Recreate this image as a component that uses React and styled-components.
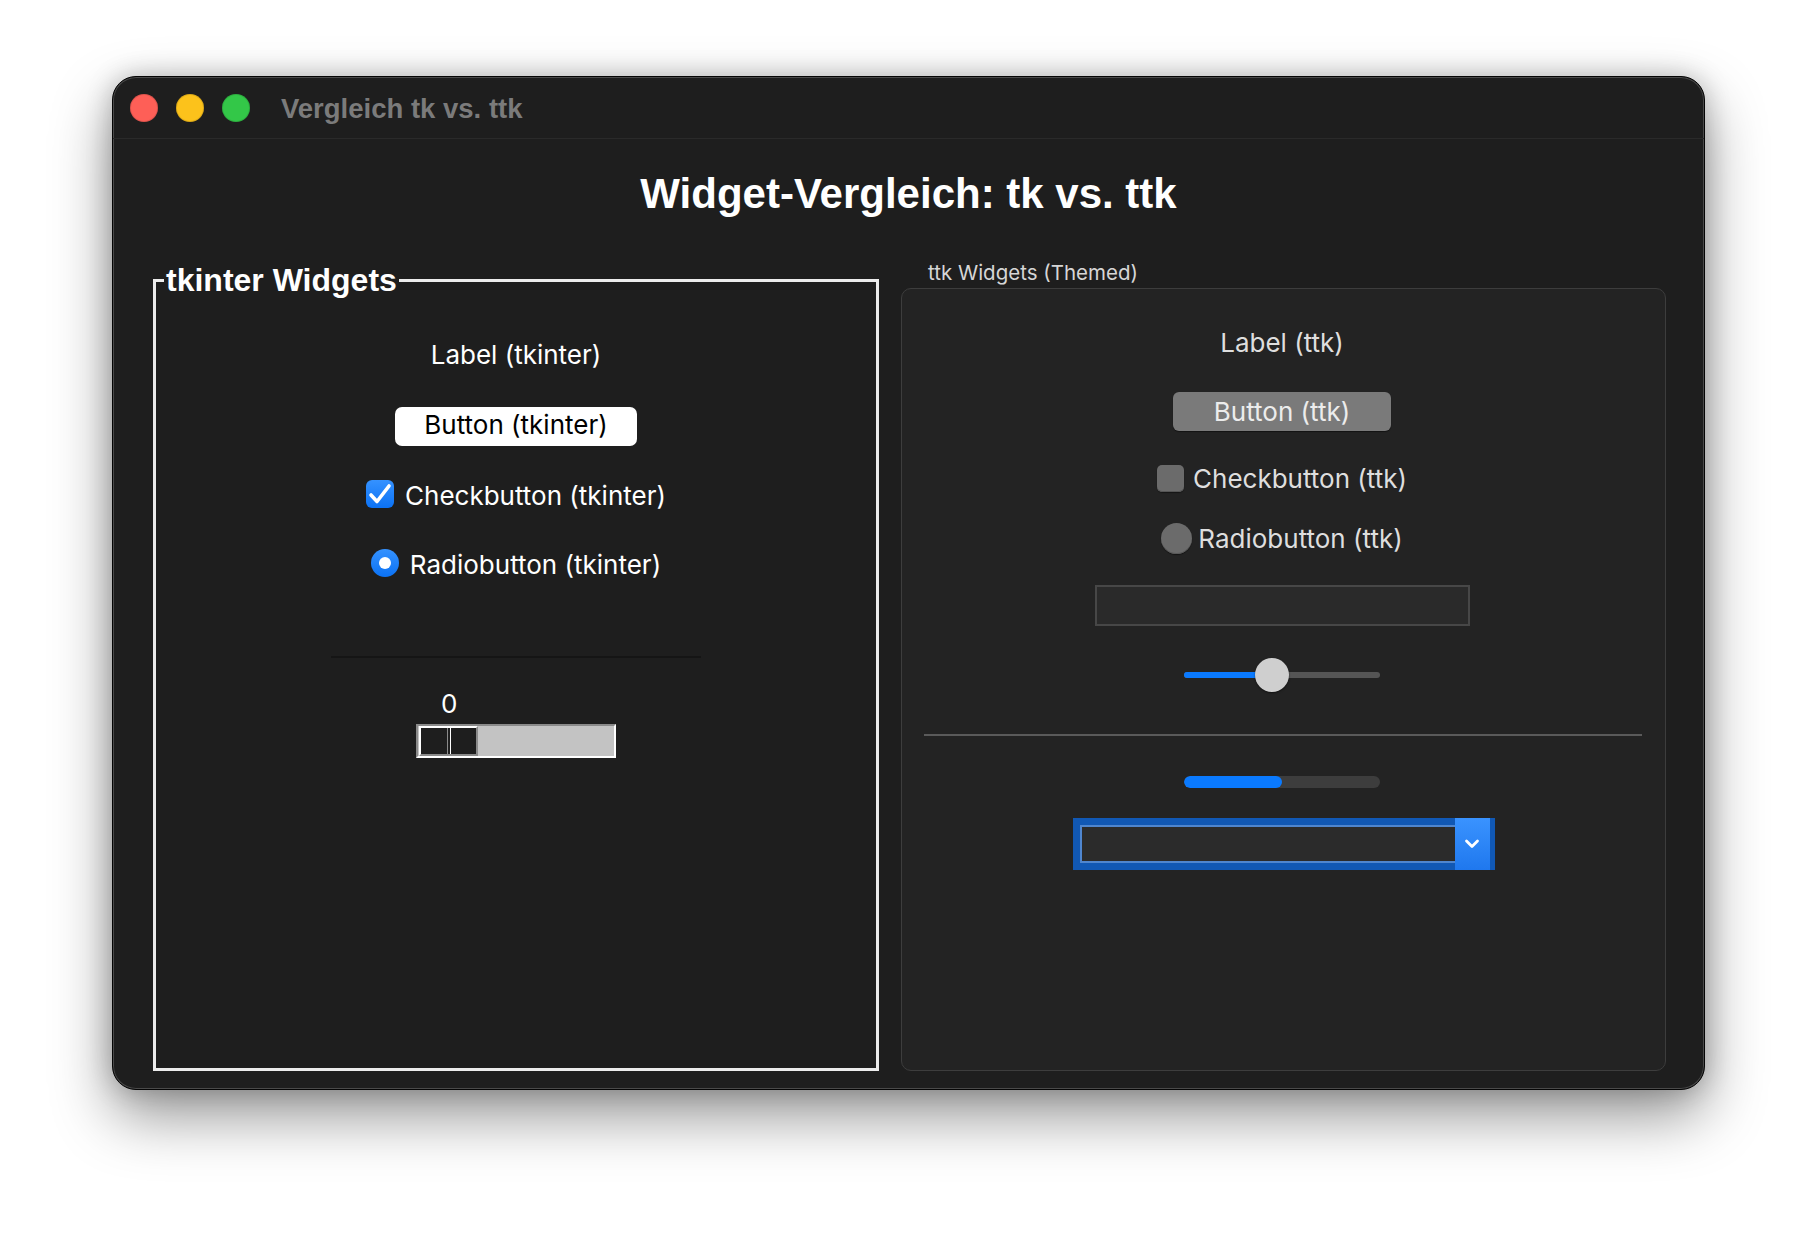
import React from 'react';
import styled, { createGlobalStyle } from 'styled-components';

const Global = createGlobalStyle`
  html, body { margin: 0; padding: 0; background: #ffffff; }
  body { width: 1818px; height: 1238px; overflow: hidden; font-family: Inter, "Noto Sans", sans-serif; }
  * { box-sizing: border-box; }
`;

const Page = styled.div`
  width: 1818px;
  height: 1238px;
  padding: 76px 0 0 112px;
  background: #ffffff;
`;

const Window = styled.div`
  width: 1593px;
  height: 1014px;
  background: #1e1e1e;
  border-radius: 24px;
  border: 1px solid #050505;
  box-shadow: inset 0 0 0 1px #4a4a4a, 0 26px 60px rgba(0, 0, 0, 0.42), 0 0 26px rgba(0, 0, 0, 0.22);
  display: flex;
  flex-direction: column;
  overflow: hidden;
`;

const TitleBar = styled.div`
  height: 62px;
  flex: none;
  display: flex;
  align-items: center;
  padding-left: 17px;
  gap: 18px;
  border-bottom: 1px solid #2a2a2a;
`;

const Light = styled.span`
  width: 28px;
  height: 28px;
  border-radius: 50%;
  background: ${(p) => p.$c};
  box-shadow: inset 0 0 0 1px rgba(0, 0, 0, 0.12);
`;

const WindowTitle = styled.span`
  margin-left: 13px;
  margin-top: 3px;
  font-family: "Liberation Sans", Arial, sans-serif;
  font-weight: 700;
  font-size: 27.5px;
  color: #7b7b7b;
`;

const Heading = styled.h1`
  margin: 31px 0 0 0;
  font-family: "Liberation Sans", Arial, sans-serif;
  font-weight: 700;
  font-size: 42px;
  line-height: 48px;
  text-align: center;
  color: #ffffff;
`;

const Columns = styled.div`
  flex: 1;
  display: flex;
  gap: 22px;
  margin-top: 44px;
  padding: 0 38px 18px 40px;
`;

/* ---------- tk side ---------- */

const TkFrame = styled.fieldset`
  margin: 0;
  padding: 42px 0 0 0;
  min-inline-size: 0;
  width: 726px;
  flex: none;
  border: 3px solid #ececec;
  display: flex;
  flex-direction: column;
  align-items: center;
`;

const TkLegend = styled.legend`
  margin-left: 8px;
  padding: 0 2px;
  font-family: "Liberation Sans", Arial, sans-serif;
  font-weight: 700;
  font-size: 32px;
  line-height: 36px;
  color: #ffffff;
`;

const Text = styled.span`
  font-size: 26px;
  line-height: 30px;
  color: ${(p) => (p.$themed ? '#dedede' : '#ffffff')};
  white-space: nowrap;
  padding-top: ${(p) => p.$drop || 0}px;
`;

const Block = styled.div`
  margin-top: ${(p) => p.$mt}px;
  flex: none;
`;

const TkButton = styled.button`
  margin-top: 37px;
  width: 242px;
  height: 39px;
  border: none;
  border-radius: 7px;
  background: #ffffff;
  color: #000000;
  font-family: Inter, "Noto Sans", sans-serif;
  font-size: 26px;
  line-height: 30px;
  padding: 0 0 3px 0;
  display: flex;
  align-items: center;
  justify-content: center;
`;

const OptionRow = styled.div`
  margin-top: ${(p) => p.$mt}px;
  height: ${(p) => p.$h}px;
  display: flex;
  align-items: center;
  gap: ${(p) => p.$gap}px;
`;

const TkCheckBox = styled.span`
  width: 28px;
  height: 28px;
  border-radius: 6px;
  background: linear-gradient(#3592ff, #0b72f5);
  display: flex;
  align-items: center;
  justify-content: center;
`;

const TkRadio = styled.span`
  width: 28px;
  height: 28px;
  border-radius: 50%;
  background: linear-gradient(#3592ff, #0b72f5);
  display: flex;
  align-items: center;
  justify-content: center;
  &::after {
    content: '';
    width: 12px;
    height: 12px;
    border-radius: 50%;
    background: #ffffff;
  }
`;

const TkSeparator = styled.div`
  margin-top: 78px;
  width: 370px;
  height: 2px;
  background: #151515;
`;

const TkScale = styled.div`
  margin-top: 31px;
  width: 200px;
  display: flex;
  flex-direction: column;
`;

const ScaleValue = styled.div`
  height: 30px;
  padding-left: 25px;
  font-size: 26px;
  line-height: 30px;
  color: #ffffff;
`;

const Trough = styled.div`
  margin-top: 5px;
  width: 200px;
  height: 34px;
  background: #c3c3c3;
  border: 2px solid;
  border-color: #8a8a8a #ffffff #ffffff #8a8a8a;
  display: flex;
  align-items: stretch;
`;

const TkSlider = styled.div`
  margin-left: 1px;
  width: 59px;
  background: #1e1e1e;
  border: 2px solid;
  border-color: #ffffff #8a8a8a #8a8a8a #ffffff;
  display: flex;
  justify-content: center;
  &::after {
    content: '';
    width: 2px;
    border-left: 1px solid #8a8a8a;
    border-right: 1px solid #ffffff;
  }
`;

/* ---------- ttk side ---------- */

const TtkColumn = styled.div`
  flex: 1;
  display: flex;
  flex-direction: column;
`;

const TtkCaption = styled.div`
  padding-left: 27px;
  font-size: 20.5px;
  line-height: 22px;
  color: #d6d6d6;
  margin-bottom: 4px;
`;

const TtkBox = styled.div`
  flex: 1;
  background: #232323;
  border: 1px solid #3d3d3d;
  border-radius: 10px;
  padding: 39px 3px 0 0;
  display: flex;
  flex-direction: column;
  align-items: center;
`;

const TtkButton = styled.button`
  margin-top: 34px;
  width: 218px;
  height: 39px;
  border: none;
  border-radius: 6px;
  background: #7a7a7a;
  box-shadow: 0 1px 1px rgba(0, 0, 0, 0.45);
  color: #ececec;
  font-family: Inter, "Noto Sans", sans-serif;
  font-size: 26px;
  line-height: 30px;
  padding: 0;
  display: flex;
  align-items: center;
  justify-content: center;
`;

const TtkCheckBox = styled.span`
  width: 27px;
  height: 27px;
  border-radius: 5px;
  background: #6b6b6b;
  box-shadow: inset 0 -1px 0 #555555, 0 1px 1px rgba(0, 0, 0, 0.4);
`;

const TtkRadio = styled.span`
  width: 31px;
  height: 31px;
  border-radius: 50%;
  background: #6b6b6b;
  box-shadow: inset 0 -1px 0 #575757, 0 1px 1px rgba(0, 0, 0, 0.45);
`;

const TtkEntry = styled.div`
  margin-top: 31px;
  width: 375px;
  height: 41px;
  background: #2a2a2a;
  border: 2px solid #474747;
`;

const TtkScale = styled.div`
  margin-top: 32px;
  width: 196px;
  height: 34px;
  position: relative;
  display: flex;
  align-items: center;
`;

const ScaleTrack = styled.div`
  width: 100%;
  height: 6px;
  border-radius: 3px;
  background: #555555;
  overflow: hidden;
`;

const ScaleFill = styled.div`
  height: 100%;
  background: #0a7aff;
`;

const ScaleKnob = styled.div`
  position: absolute;
  top: 0;
  width: 34px;
  height: 34px;
  border-radius: 50%;
  background: #cfcfcf;
  box-shadow: 0 1px 2px rgba(0, 0, 0, 0.5);
`;

const TtkSeparator = styled.div`
  margin-top: 42px;
  align-self: stretch;
  margin-left: 22px;
  margin-right: 20px;
  height: 2px;
  background: #5a5a5a;
`;

const Progress = styled.div`
  margin-top: 40px;
  width: 196px;
  height: 12px;
  border-radius: 6px;
  background: #3d3d3d;
  overflow: hidden;
`;

const ProgressFill = styled.div`
  height: 100%;
  border-radius: 6px;
  background: #0a7aff;
`;

const Combo = styled.div`
  margin-top: 30px;
  margin-left: 3px;
  width: 422px;
  height: 52px;
  background: #1158b4;
  padding: 7px 5px 7px 7px;
  display: flex;
`;

const ComboField = styled.div`
  flex: 1;
  background: #2b2b2b;
  border: 2px solid #4f86cf;
  border-right: none;
`;

const ComboArrow = styled.div`
  width: 35px;
  margin-top: -7px;
  margin-bottom: -7px;
  background: linear-gradient(#3a93ff, #1f78ee);
  display: flex;
  align-items: center;
  justify-content: center;
`;

function Check() {
  return (
    <svg width="28" height="28" viewBox="0 0 28 28">
      <path d="M5 15 L11 21.5 L23 6" fill="none" stroke="#fff" strokeWidth="3.6" strokeLinecap="round" strokeLinejoin="round" />
    </svg>
  );
}

function Chevron() {
  return (
    <svg width="16" height="12" viewBox="0 0 16 12">
      <path d="M2.5 3 L8 8.5 L13.5 3" fill="none" stroke="#fff" strokeWidth="2.8" strokeLinecap="round" strokeLinejoin="round" />
    </svg>
  );
}

export default function App() {
  const scaleValue = 0.44;
  const progressValue = 0.5;
  const scaleWidth = 196;
  const knob = 34;
  const knobLeft = Math.round(scaleValue * (scaleWidth - knob));
  return (
    <>
      <Global />
      <Page>
        <Window>
          <TitleBar>
            <Light $c="#fe5f57" />
            <Light $c="#fcc21b" />
            <Light $c="#33c748" />
            <WindowTitle>Vergleich tk vs. ttk</WindowTitle>
          </TitleBar>
          <Heading>Widget-Vergleich: tk vs. ttk</Heading>
          <Columns>
            <TkFrame>
              <TkLegend>tkinter Widgets</TkLegend>
              <Block $mt={0}>
                <Text>Label (tkinter)</Text>
              </Block>
              <TkButton>Button (tkinter)</TkButton>
              <OptionRow $mt={33} $h={30} $gap={11}>
                <TkCheckBox>
                  <Check />
                </TkCheckBox>
                <Text $drop={4}>Checkbutton (tkinter)</Text>
              </OptionRow>
              <OptionRow $mt={39} $h={30} $gap={11}>
                <TkRadio />
                <Text $drop={4}>Radiobutton (tkinter)</Text>
              </OptionRow>
              <TkSeparator />
              <TkScale>
                <ScaleValue>0</ScaleValue>
                <Trough>
                  <TkSlider />
                </Trough>
              </TkScale>
            </TkFrame>
            <TtkColumn>
              <TtkCaption>ttk Widgets (Themed)</TtkCaption>
              <TtkBox>
                <Block $mt={0}>
                  <Text $themed>Label (ttk)</Text>
                </Block>
                <TtkButton>Button (ttk)</TtkButton>
                <OptionRow $mt={32} $h={30} $gap={9}>
                  <TtkCheckBox />
                  <Text $themed $drop={2}>Checkbutton (ttk)</Text>
                </OptionRow>
                <OptionRow $mt={29} $h={32} $gap={6}>
                  <TtkRadio />
                  <Text $themed $drop={2}>Radiobutton (ttk)</Text>
                </OptionRow>
                <TtkEntry />
                <TtkScale>
                  <ScaleTrack>
                    <ScaleFill style={{ width: knobLeft + knob / 2 }} />
                  </ScaleTrack>
                  <ScaleKnob style={{ left: knobLeft }} />
                </TtkScale>
                <TtkSeparator />
                <Progress>
                  <ProgressFill style={{ width: `${progressValue * 100}%` }} />
                </Progress>
                <Combo>
                  <ComboField />
                  <ComboArrow>
                    <Chevron />
                  </ComboArrow>
                </Combo>
              </TtkBox>
            </TtkColumn>
          </Columns>
        </Window>
      </Page>
    </>
  );
}
